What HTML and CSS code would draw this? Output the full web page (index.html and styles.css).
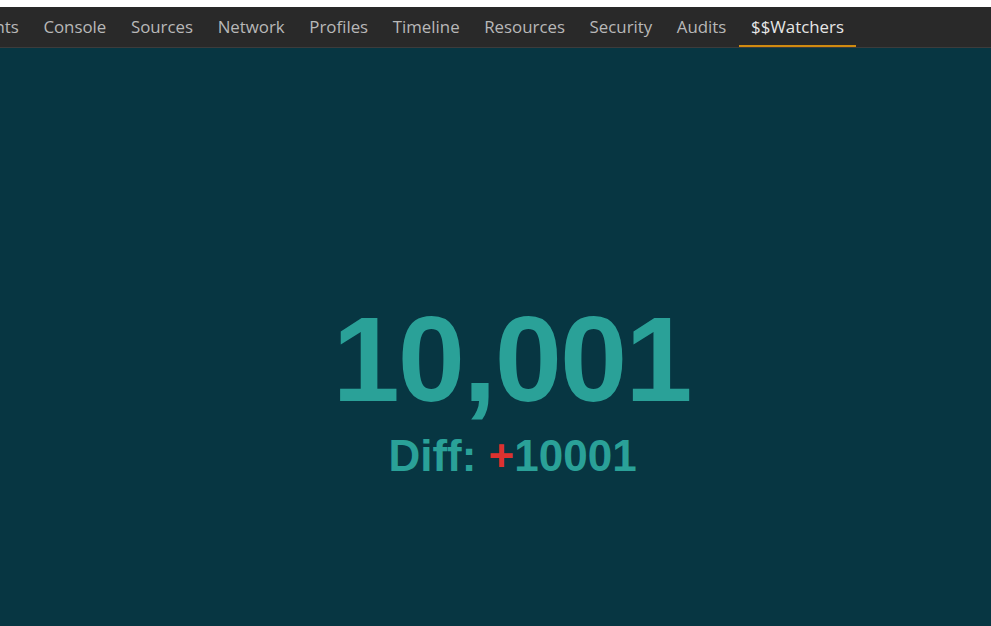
FILE: index.html
```html
<!DOCTYPE html>
<html>
<head>
<meta charset="utf-8">
<link rel="stylesheet" href="styles.css">
</head>
<body>
<div class="topstrip"></div>
<nav class="tabbar">
  <ul class="tabs">
    <li class="tab">Elements</li>
    <li class="tab">Console</li>
    <li class="tab">Sources</li>
    <li class="tab">Network</li>
    <li class="tab">Profiles</li>
    <li class="tab">Timeline</li>
    <li class="tab">Resources</li>
    <li class="tab">Security</li>
    <li class="tab">Audits</li>
    <li class="tab active">$$Watchers</li>
  </ul>
</nav>
<main class="panel">
  <div class="count">10,001</div>
  <div class="diff">Diff: <span class="plus">+</span>10001</div>
</main>
</body>
</html>
```
FILE: styles.css
```css
html, body {
  margin: 0;
  padding: 0;
  height: 100%;
}
body {
  display: flex;
  flex-direction: column;
  background: #073642;
  overflow: hidden;
}
.topstrip {
  height: 7px;
  background: #ffffff;
  flex: none;
}
.tabbar {
  flex: none;
  height: 40px;
  background: #292929;
  border-bottom: 1px solid #3c3c3c;
  overflow: hidden;
}
.tabs {
  list-style: none;
  margin: 0 0 0 -66px;
  padding: 0;
  display: flex;
  height: 100%;
  white-space: nowrap;
}
.tab {
  font-family: "Open Sans", "Noto Sans", sans-serif;
  font-size: 16.85px;
  color: #b8b8b8;
  padding: 1px 12.3px 0;
  display: flex;
  align-items: center;
  height: 40px;
  box-sizing: border-box;
  border-bottom: 2px solid transparent;
}
.tab.active {
  color: #e6e6e6;
  border-bottom-color: #d08b10;
}
.panel {
  flex: 1;
  display: flex;
  flex-direction: column;
  align-items: center;
  padding-top: 251px;
  padding-left: 32px;
  font-family: "Liberation Sans", Arial, sans-serif;
  font-weight: bold;
  color: #2aa198;
}
.count {
  font-size: 121px;
  line-height: 1;
  letter-spacing: -2px;
}
.diff {
  font-size: 44px;
  line-height: 1;
  margin-top: 14px;
  padding-left: 2px;
}
.plus {
  color: #dc322f;
}
```
